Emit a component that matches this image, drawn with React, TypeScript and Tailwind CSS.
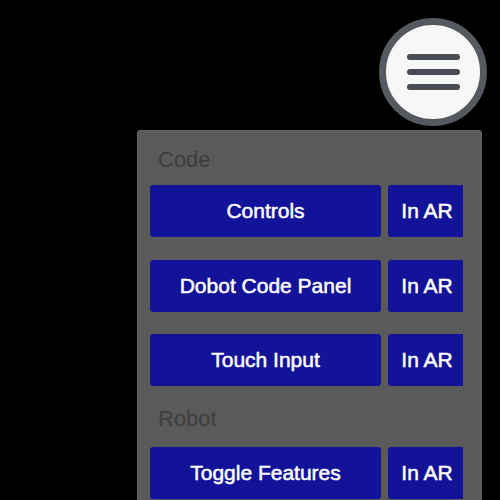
import React from 'react';

const sections = [
  { title: 'Code', items: ['Controls', 'Dobot Code Panel', 'Touch Input'] },
  { title: 'Robot', items: ['Toggle Features'] },
];

const btn =
  'shrink-0 h-[52px] rounded-[3px] bg-[#13139a] text-white text-[21px] [-webkit-text-stroke:0.5px_white]';

const Row = ({ label }: { label: string }) => (
  <div className="flex gap-[7px] w-[313px] overflow-hidden">
    <button className={`${btn} w-[231px]`}>{label}</button>
    <button className={`${btn} w-[78px]`}>In AR</button>
  </div>
);

export default function App() {
  return (
    <div
      className="h-[500px] w-[500px] overflow-hidden bg-black pt-[18px]"
      style={{ fontFamily: '"Liberation Sans", Arial, sans-serif' }}
    >
      {/* Menu toggle */}
      <div className="ml-[379px] w-[108px] h-[108px] rounded-full border-[7px] border-[#555a60] bg-[#f7f7f7] flex flex-col items-center justify-center gap-[9px]">
        <span className="block w-[53px] h-[6px] rounded-full bg-[#484d53]" />
        <span className="block w-[53px] h-[6px] rounded-full bg-[#484d53]" />
        <span className="block w-[53px] h-[6px] rounded-full bg-[#484d53]" />
      </div>

      {/* Menu panel */}
      <div className="ml-[137px] mt-[4px] w-[345px] h-[400px] rounded-t-[3px] bg-[#5a5a5a] border border-[#646464] pl-[12px] pt-[16px]">
        {sections.map((section, i) => (
          <div key={section.title} className={i > 0 ? 'mt-[20px]' : ''}>
            <div className={`pl-[8px] text-[22px] leading-[25px] text-[#3d3d3d] ${i > 0 ? 'mb-[16px]' : 'mb-[13px]'}`}>
              {section.title}
            </div>
            <div className="flex flex-col gap-[22.5px]">
              {section.items.map((item) => (
                <Row key={item} label={item} />
              ))}
            </div>
          </div>
        ))}
      </div>
    </div>
  );
}
